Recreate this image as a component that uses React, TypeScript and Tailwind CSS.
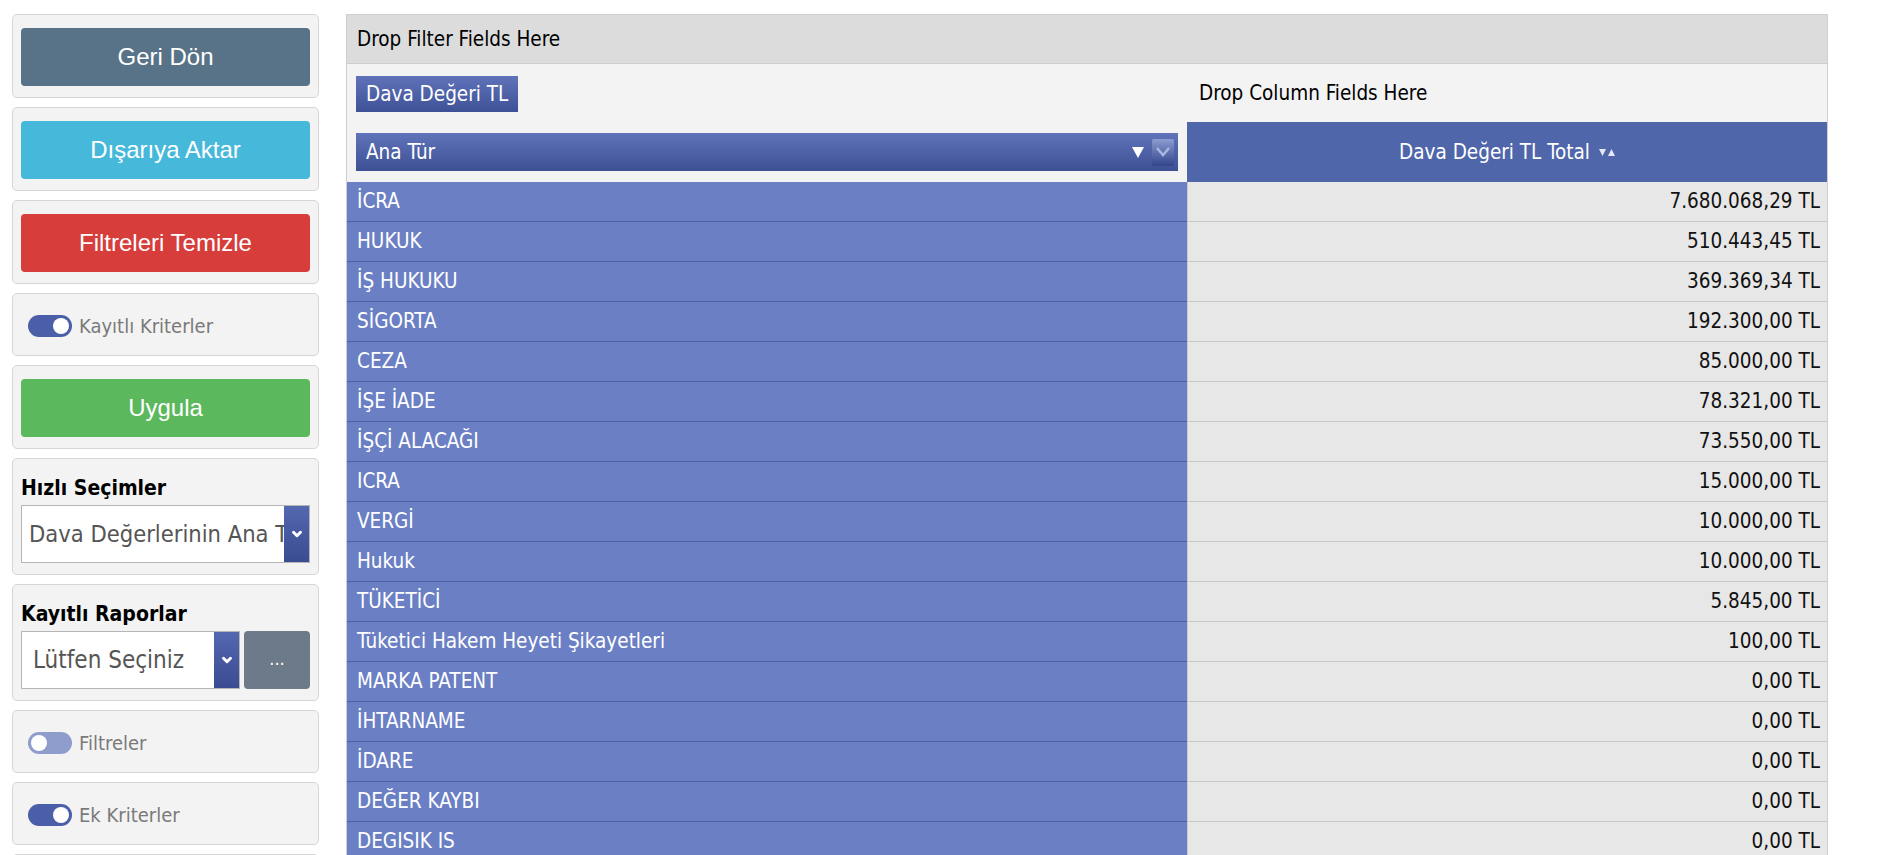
import { ChevronDown } from "lucide-react";

const rows: [string, string][] = [
  ["İCRA", "7.680.068,29 TL"],
  ["HUKUK", "510.443,45 TL"],
  ["İŞ HUKUKU", "369.369,34 TL"],
  ["SİGORTA", "192.300,00 TL"],
  ["CEZA", "85.000,00 TL"],
  ["İŞE İADE", "78.321,00 TL"],
  ["İŞÇİ ALACAĞI", "73.550,00 TL"],
  ["ICRA", "15.000,00 TL"],
  ["VERGİ", "10.000,00 TL"],
  ["Hukuk", "10.000,00 TL"],
  ["TÜKETİCİ", "5.845,00 TL"],
  ["Tüketici Hakem Heyeti Şikayetleri", "100,00 TL"],
  ["MARKA PATENT", "0,00 TL"],
  ["İHTARNAME", "0,00 TL"],
  ["İDARE", "0,00 TL"],
  ["DEĞER KAYBI", "0,00 TL"],
  ["DEGISIK IS", "0,00 TL"],
];

function Card({ children, className = "" }: { children: React.ReactNode; className?: string }) {
  return (
    <div className={`rounded-[5px] border border-[#d6d6d6] bg-[#f3f3f3] px-[8px] ${className}`}>
      {children}
    </div>
  );
}

function BigButton({ label, color }: { label: string; color: string }) {
  return (
    <Card className="pt-[13px] pb-[11px]">
      <button
        className={`flex h-[58px] w-full items-center justify-center rounded-[4px] text-[24px] text-white font-['Liberation_Sans',Arial,sans-serif] ${color}`}
      >
        {label}
      </button>
    </Card>
  );
}

function Toggle({ label, on }: { label: string; on: boolean }) {
  return (
    <Card className="flex h-[63px] items-center pl-[15px] pt-[2px]">
      <span
        className={`flex h-[22px] w-[44px] items-center rounded-full px-[3px] ${
          on ? "justify-end bg-[#4b5fa9]" : "justify-start bg-[#8f9dcd]"
        }`}
      >
        <span className="h-[16px] w-[16px] rounded-full bg-white" />
      </span>
      <span className="ml-[7px] text-[20px] text-[#7a7a7a]">{label}</span>
    </Card>
  );
}

function SelectArrow() {
  return (
    <span className="flex w-[25px] shrink-0 items-center justify-center bg-gradient-to-b from-[#5468b0] to-[#3a4c91]">
      <ChevronDown className="h-[14px] w-[14px] text-white" strokeWidth={5} />
    </span>
  );
}

const tah = "font-['DejaVu_Sans_Condensed','DejaVu_Sans',sans-serif] [font-stretch:condensed]";

export default function App() {
  return (
    <div className={`flex min-h-screen gap-[27px] bg-white pl-[12px] pt-[14px] ${tah}`}>
      <aside className="flex w-[307px] shrink-0 flex-col gap-[9px]">
        <BigButton label="Geri Dön" color="bg-[#587387]" />
        <BigButton label="Dışarıya Aktar" color="bg-[#46b8da]" />
        <BigButton label="Filtreleri Temizle" color="bg-[#d63d3b]" />
        <Toggle label="Kayıtlı Kriterler" on />
        <BigButton label="Uygula" color="bg-[#5cb85c]" />
        <Card className="pt-[13px] pb-[11px]">
          <div className="text-[21px] font-bold leading-[33px] text-black">Hızlı Seçimler</div>
          <div className="flex h-[58px] border border-[#b5b5b5] bg-white">
            <span className="flex-1 overflow-hidden whitespace-nowrap pl-[7px] text-[23.5px] leading-[56px] text-[#555]">
              Dava Değerlerinin Ana Türleri
            </span>
            <SelectArrow />
          </div>
        </Card>
        <Card className="pt-[13px] pb-[11px]">
          <div className="text-[21px] font-bold leading-[33px] text-black">Kayıtlı Raporlar</div>
          <div className="flex gap-[4px]">
            <div className="flex h-[58px] w-[219px] border border-[#b5b5b5] bg-white">
              <span className="flex-1 overflow-hidden whitespace-nowrap pl-[11px] text-[24px] leading-[56px] text-[#555]">
                Lütfen Seçiniz
              </span>
              <SelectArrow />
            </div>
            <button className="flex h-[58px] flex-1 items-center justify-center rounded-[4px] bg-[#6c7a89] pb-[4px] text-[18px] text-white">
              ...
            </button>
          </div>
        </Card>
        <Toggle label="Filtreler" on={false} />
        <Toggle label="Ek Kriterler" on />
        <Toggle label="Grafik" on={false} />
      </aside>

      <main className="w-[1482px] shrink-0 border-l border-t border-r border-[#cfcfcf] text-[20.5px]">
        <div className="flex h-[49px] items-center border-b border-[#cdcdcd] bg-[#dcdcdc] pl-[10px] text-black">
          Drop Filter Fields Here
        </div>
        <div className="grid grid-cols-[840px_1fr] bg-[#f3f3f3]">
          <div className="h-[58px] pl-[9px] pt-[12px]">
            <span className="inline-flex h-[36px] items-center bg-gradient-to-b from-[#6073ba] to-[#3f5196] px-[10px] text-white">
              Dava Değeri TL
            </span>
          </div>
          <div className="flex h-[58px] items-center pl-[12px] text-black">Drop Column Fields Here</div>
          <div className="h-[60px] px-[9px] pt-[11px]">
            <div className="flex h-[38px] items-center bg-gradient-to-b from-[#6074ba] to-[#3e5094] pl-[10px] pr-[4px] text-white">
              <span className="flex-1">Ana Tür</span>
              <svg width="12" height="11" viewBox="0 0 12 11" className="mr-[8px]">
                <path d="M0 0 H12 L6 11 Z" fill="#fff" />
              </svg>
              <span className="flex h-[27px] w-[22px] items-center justify-center rounded-[2px] bg-gradient-to-b from-[#8d9dd2] to-[#33458a]">
                <svg width="14" height="10" viewBox="0 0 14 10">
                  <path d="M1 1 L7 8 L13 1" stroke="#a9b6e2" strokeWidth="2.5" fill="none" />
                </svg>
              </span>
            </div>
          </div>
          <div className="flex h-[60px] items-center justify-center gap-[9px] bg-[#4f66ab] text-white">
            <span>Dava Değeri TL Total</span>
            <svg width="16" height="10" viewBox="0 0 16 10">
              <path d="M0 2 H7 L3.5 9 Z" fill="#e4e8f5" />
              <path d="M9 9 H16 L12.5 2 Z" fill="#e4e8f5" />
            </svg>
          </div>
        </div>
        <div className="grid grid-cols-[840px_1fr]">
          {rows.map(([name, value], i) => (
            <div key={i} className="contents">
              <div className="flex h-[40px] items-center border-b border-[#4d60a6] bg-[#6b7fc4] pl-[10px] text-white">
                {name}
              </div>
              <div className="flex h-[40px] items-center justify-end border-b border-l border-[#c9c9c9] bg-[#e7e7e7] pr-[7px] text-[#111]">
                {value}
              </div>
            </div>
          ))}
        </div>
      </main>
    </div>
  );
}
